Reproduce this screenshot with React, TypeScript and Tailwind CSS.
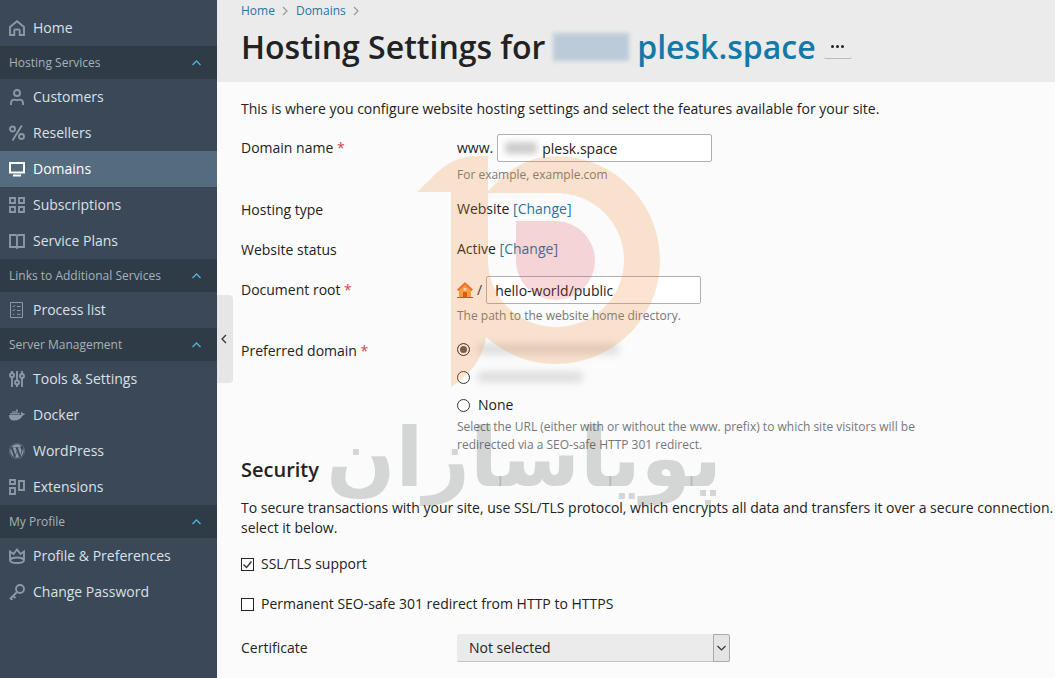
import React from "react";
import { FaDocker, FaWordpress } from "react-icons/fa";

function Svg({ children }: { children: React.ReactNode }) {
  return (
    <svg viewBox="0 0 16 16" className="size-4 shrink-0" fill="none" stroke="currentColor" strokeWidth="1.9" aria-hidden="true">
      {children}
    </svg>
  );
}

function WordPressIcon() {
  return <FaWordpress className="size-4 shrink-0" aria-hidden="true" />;
}

const icons: Record<string, React.ReactNode> = {
  home: <Svg><path d="M1 7 8 1.200 15 7v8h-4.300v-4.500a1 1 0 0 0-1-1H6.300a1 1 0 0 0-1 1V15H1z" /></Svg>,
  user: <Svg><circle cx="8" cy="4" r="3" /><path d="M2 16v-2a3.500 3.500 0 0 1 3.500-3.400c1 0 1.300.7 2.500.7s1.500-.7 2.500-.7A3.500 3.500 0 0 1 14 14v2" /></Svg>,
  percent: <Svg><circle cx="3.500" cy="4" r="2.500" /><circle cx="12.500" cy="11.500" r="2.500" /><path d="M12.800.5 3.500 15.500" /></Svg>,
  monitor: <Svg><path d="M1 2h14v9.500H1z" strokeWidth="2" /><path d="M4 14.500h8" strokeWidth="2" /></Svg>,
  grid: <Svg><path d="M1 1h5v5H1zM10 1h5v5h-5zM1 10h5v5H1zM10 10h5v5h-5z" /></Svg>,
  book: <Svg><path d="M1 2h5.500L8 3l1.500-1H15v12H9.500L8 15l-1.500-1H1zM8 3v12" /></Svg>,
  list: <Svg><path d="M1.500.5h12v15h-12z" strokeWidth="1" /><path d="m3.500 4 1 1L6 3.200M3.500 8l1 1L6 7.200M4 12.300h1.200M8 4.500h3.500M8 8.500h3.500M8 12.300h3.500" strokeWidth="1" /></Svg>,
  tools: <Svg><path d="M3 0v2.500M3 6v10M8 0v9.500M8 13v3M13 0v3M13 6.500V16" /><circle cx="3" cy="4.300" r="2" /><circle cx="8" cy="11.500" r="2" /><circle cx="13" cy="5" r="2" /></Svg>,
  docker: <FaDocker className="size-4 shrink-0" aria-hidden="true" />,
  wordpress: <WordPressIcon />,
  extensions: <Svg><path d="M1 1h5v4H1zM1 9h5v6H1zM10 2h5v9h-5z" /></Svg>,
  crown: <Svg><path d="M1 3.500 4.500 6 8 1.500 11.500 6 15 3.500V12c0 4-14 4-14 0zM1.500 11.500c2-2.600 11-2.600 13 0" /></Svg>,
  key: <Svg><circle cx="11" cy="5" r="4" /><path d="M8 8 1 15M1.500 14.500l2 1.500M4.200 11.800l2.300 2.300" /></Svg>,
};

type Entry = { label: string; icon: string };
const groups: { title?: string; items: Entry[] }[] = [
  { items: [{ label: "Home", icon: "home" }] },
  {
    title: "Hosting Services",
    items: [
      { label: "Customers", icon: "user" },
      { label: "Resellers", icon: "percent" },
      { label: "Domains", icon: "monitor" },
      { label: "Subscriptions", icon: "grid" },
      { label: "Service Plans", icon: "book" },
    ],
  },
  { title: "Links to Additional Services", items: [{ label: "Process list", icon: "list" }] },
  {
    title: "Server Management",
    items: [
      { label: "Tools & Settings", icon: "tools" },
      { label: "Docker", icon: "docker" },
      { label: "WordPress", icon: "wordpress" },
      { label: "Extensions", icon: "extensions" },
    ],
  },
  {
    title: "My Profile",
    items: [
      { label: "Profile & Preferences", icon: "crown" },
      { label: "Change Password", icon: "key" },
    ],
  },
];

function Sidebar() {
  return (
    <nav className="w-[217px] shrink-0 bg-[#3a4858] pt-2.5">
      {groups.map((group, i) => (
        <section key={i}>
          {group.title && (
            <button type="button" className="flex h-[33px] w-full items-center justify-between bg-[#2f3b47] pr-4 pl-[9px] text-xs text-[#a9b1b9]">
              {group.title}
              <svg viewBox="0 0 9 6" className="h-1.5 w-[9px]" fill="none" stroke="#4db5dd" strokeWidth="1.300" aria-hidden="true">
                <path d="m.5 5 4-4 4 4" />
              </svg>
            </button>
          )}
          <ul>
            {group.items.map((item) => {
              const active = item.label === "Domains";
              return (
                <li key={item.label}>
                  <a href="#" className={active ? "flex h-9 items-center gap-2 bg-[#556b7e] pl-[9px] text-white" : "flex h-9 items-center gap-2 pl-[9px] text-[#dce0e4]"}>
                    <span className={active ? "text-white" : "text-[#8d98a3]"}>{icons[item.icon]}</span>
                    {item.label}
                  </a>
                </li>
              );
            })}
          </ul>
        </section>
      ))}
    </nav>
  );
}

function Crumb({ children }: { children: string }) {
  return (
    <li className="flex items-center gap-[7px]">
      <a href="#" className="text-[#28769e]">{children}</a>
      <svg viewBox="0 0 6 10" className="h-2.5 w-1.5" fill="none" stroke="#999" strokeWidth="1.200" aria-hidden="true">
        <path d="m1 1 4 4-4 4" />
      </svg>
    </li>
  );
}

function Row({ label, htmlFor, required, children }: { label: string; htmlFor?: string; required?: boolean; children: React.ReactNode }) {
  const text = (
    <>
      {label}
      {required && <span className="text-[#d0454c]"> *</span>}
    </>
  );
  return (
    <div className="flex">
      <div className="w-[216px] shrink-0 pt-1">
        {htmlFor ? <label htmlFor={htmlFor}>{text}</label> : text}
      </div>
      <div className="min-w-0 flex-1">{children}</div>
    </div>
  );
}

const field = "h-7 w-[215px] rounded-xs border border-[#b0b0b0] bg-white";
const radio = "size-[13px] shrink-0 appearance-none rounded-full border border-[#333] bg-white checked:bg-[#555] checked:shadow-[inset_0_0_0_2px_white]";
const tick = "size-[13px] appearance-none border border-[#222] bg-white";

function HouseIcon() {
  return (
    <svg viewBox="0 0 16 16" className="size-4" aria-hidden="true">
      <path d="M2 7.500 8 2l6 5.500V15H2z" fill="#fba04c" />
      <path d="M0 15h16v1H0z" fill="#a9502e" />
      <path d="M8 0 16 7.500 14.500 9 8 3 1.500 9 0 7.500z" fill="#ee6a30" />
      <path d="M6 10h4v5H6z" fill="#e04c06" />
      <path d="M6.500 6h3v2.500h-3z" fill="#fbe3c0" />
    </svg>
  );
}

function Watermark() {
  return (
    <div className="pointer-events-none absolute top-[150px] left-[115px] w-[390px]" aria-hidden="true">
      <svg viewBox="332 150 390 240" className="h-[240px] w-[390px]">
        <g fill="#ed8a2c" opacity="0.22">
          <path d="M417 192c18-16 30-36 60-36h11v35c25-27 46-35 68-35 57 0 104 46 104 104s-47 104-104 104c-28 0-52-11-70-27-3 21-16 38-35 50V192z M488 193v67a68 67 0 1 0 68-67z" fillRule="evenodd" />
        </g>
        <path d="M516 221h40a39.500 39.500 0 1 1-40 39z" fill="#dc3c3c" opacity="0.200" />
      </svg>
      <div dir="rtl" className="text-center font-['DejaVu_Sans',sans-serif] text-[81px] leading-[136px] font-bold whitespace-nowrap text-[#3c4643]/20">پویاسازان</div>
    </div>
  );
}

export default function App() {
  return (
    <div className="flex min-h-screen overflow-x-hidden bg-[#fbfbfb] font-['Open_Sans',sans-serif] text-sm leading-5 text-[#222]">
      <Sidebar />
      <main className="relative min-w-0 flex-1">
        <header className="h-[82px] bg-[#ebebeb] pl-6">
          <ol className="flex gap-2 pt-[3px] text-xs leading-4">
            <Crumb>Home</Crumb>
            <Crumb>Domains</Crumb>
          </ol>
          <div className="flex items-center pt-1.5">
            <h1 className="flex items-center text-[32px] leading-11 font-semibold whitespace-nowrap">
              Hosting Settings for
              <span className="mx-2 h-7 w-[76px] bg-[#bccbd9] blur-[2px]" />
              <a href="#" className="text-[#1279a8]">plesk.space</a>
            </h1>
            <button type="button" aria-label="More" className="ml-2 flex h-6 w-7 items-center justify-center gap-0.5 rounded-xs border-b border-[#bbb]">
              <i className="size-[3px] rounded-full bg-[#222]" />
              <i className="size-[3px] rounded-full bg-[#222]" />
              <i className="size-[3px] rounded-full bg-[#222]" />
            </button>
          </div>
        </header>

        <button type="button" aria-label="Collapse sidebar" className="absolute top-[295px] left-0 flex h-[88px] w-4 items-center justify-center rounded-r bg-[#e6e6e6] pr-0.5">
          <svg viewBox="0 0 6 10" className="h-2.5 w-1.5" fill="none" stroke="#333" strokeWidth="1.300" aria-hidden="true">
            <path d="M5 1 1 5l4 4" />
          </svg>
        </button>

        <form className="pt-[17px] pl-6">
          <p>This is where you configure website hosting settings and select the features available for your site.</p>
          <div className="flex flex-col gap-3 pt-[15px]">
            <Row label="Domain name" htmlFor="domain" required>
              <div className="flex items-center gap-1">
                <span>www.</span>
                <div className="relative">
                  <input id="domain" defaultValue="plesk.space" className={`${field} pl-11`} />
                  <span className="absolute top-2 left-2 h-3 w-8 bg-[#ccc] blur-[3px]" />
                </div>
              </div>
              <p className="pt-1 text-xs leading-[18px] text-[#777]">For example, example.com</p>
            </Row>
            <Row label="Hosting type"><p className="h-7 pt-[3px]">Website <a href="#" className="text-[#28769e]">[Change]</a></p></Row>
            <Row label="Website status"><p className="h-7 pt-[3px]">Active <a href="#" className="text-[#28769e]">[Change]</a></p></Row>
            <Row label="Document root" htmlFor="root" required>
              <div className="flex items-center gap-1">
                <HouseIcon />
                <span>/</span>
                <input id="root" defaultValue="hello-world/public" className={`${field} pl-2`} />
              </div>
              <p className="pt-[3px] text-xs leading-[18px] text-[#777]">The path to the website home directory.</p>
            </Row>
            <Row label="Preferred domain" required>
              <div className="flex flex-col gap-2 pt-0.5">
                <label className="flex h-5 items-center gap-2">
                  <input type="radio" name="preferred" defaultChecked aria-label="Domain with www prefix" className={radio} />
                  <span className="h-2 w-[140px] bg-[#999]/40 blur-xs" />
                </label>
                <label className="flex h-5 items-center gap-2">
                  <input type="radio" name="preferred" aria-label="Domain without www prefix" className={radio} />
                  <span className="h-2 w-[104px] bg-[#999]/40 blur-xs" />
                </label>
                <label className="flex h-5 items-center gap-2">
                  <input type="radio" name="preferred" className={radio} />
                  None
                </label>
              </div>
              <p className="max-w-[480px] pt-[3px] text-xs leading-[18px] text-[#777]">
                Select the URL (either with or without the www. prefix) to which site visitors will be redirected via a SEO-safe HTTP 301 redirect.
              </p>
            </Row>
          </div>

          <h2 className="pt-0.5 text-xl leading-7 font-semibold">Security</h2>
          <p className="pt-3.5">
            To secure transactions with your site, use SSL/TLS protocol, which encrypts all data and transfers it over a secure connection. select it below.
          </p>
          <label className="mt-4 flex h-5 items-center gap-[7px]">
            <span className="relative flex">
              <input type="checkbox" defaultChecked className={tick} />
              <svg viewBox="0 0 13 13" className="pointer-events-none absolute inset-0 size-[13px]" fill="none" stroke="#333" strokeWidth="1.400" aria-hidden="true">
                <path d="m2.500 6.500 3 3 5-6" />
              </svg>
            </span>
            SSL/TLS support
          </label>
          <label className="mt-5 flex h-5 items-center gap-[7px]">
            <input type="checkbox" className={tick} />
            Permanent SEO-safe 301 redirect from HTTP to HTTPS
          </label>
          <div className="pt-5 pb-3">
            <Row label="Certificate" htmlFor="certificate">
              <div className="relative w-[273px]">
                <select id="certificate" className="h-7 w-full appearance-none rounded-xs border-b border-[#c4c4c4] bg-[#ebebeb] pl-3">
                  <option>Not selected</option>
                </select>
                <span className="pointer-events-none absolute inset-y-0 right-0 flex w-[17px] items-center justify-center rounded-r-xs border border-[#aaa] bg-[#e4e4e4]">
                  <svg viewBox="0 0 9 6" className="h-1.5 w-[9px]" fill="none" stroke="#333" strokeWidth="1.200" aria-hidden="true">
                    <path d="m.5 1 4 4 4-4" />
                  </svg>
                </span>
              </div>
            </Row>
          </div>
        </form>
        <Watermark />
      </main>
    </div>
  );
}
